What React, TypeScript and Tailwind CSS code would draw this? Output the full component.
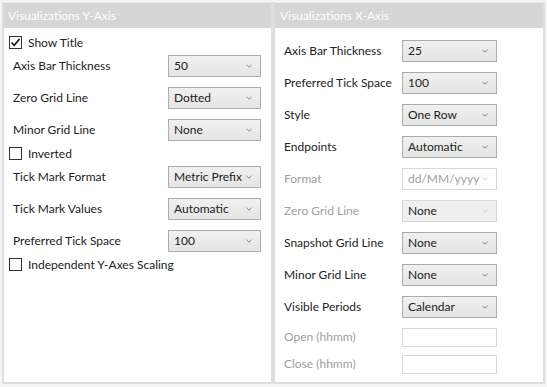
import React from "react";

const font = { fontFamily: '"Segoe UI", Lato, "Noto Sans", sans-serif' };

function Chevron({ disabled }: { disabled?: boolean }) {
  return (
    <svg width="6" height="4" viewBox="0 0 6 4" className="shrink-0">
      <path d="M0.5 0.8 L3 3.2 L5.5 0.8" fill="none" stroke={disabled ? "#c8c8c8" : "#808080"} strokeWidth="1" />
    </svg>
  );
}

function Select({ value, w, disabled, grayText }: { value: string; w: string; disabled?: boolean; grayText?: boolean }) {
  return (
    <div
      className={`${w} h-[22px] flex items-center justify-between pl-[5px] pr-[8px] border ${
        disabled ? "border-[#d9d9d9] bg-[#efefef]" : "border-[#acacac] bg-gradient-to-b from-[#f0f0f0] to-[#e5e5e5]"
      } ${grayText ? "bg-white text-[#a0a0a0]" : "text-[#222]"}`}
    >
      <span>{value}</span>
      <Chevron disabled={disabled} />
    </div>
  );
}

function Check({ checked, label }: { checked?: boolean; label: string }) {
  return (
    <div className="flex items-center h-[15px] pl-[5px] gap-[6px]">
      <div className="w-[13px] h-[13px] border border-[#333] bg-white flex items-center justify-center">
        {checked && (
          <svg width="11" height="11" viewBox="0 0 11 11">
            <path d="M1.5 5.5 L4.2 8.3 L9.5 2" fill="none" stroke="#111" strokeWidth="1.6" />
          </svg>
        )}
      </div>
      <span className="text-[#222]">{label}</span>
    </div>
  );
}

function LRow({ label, value }: { label: string; value: string }) {
  return (
    <div className="flex items-center h-[32px] pl-[9px]">
      <span className="w-[155px] text-[#222]">{label}</span>
      <Select value={value} w="w-[93px]" />
    </div>
  );
}

function RRow({ label, value, disabled, grayLabel, grayText }: { label: string; value: string; disabled?: boolean; grayLabel?: boolean; grayText?: boolean }) {
  return (
    <div className="flex items-center h-[32px] pl-[9px]">
      <span className={`w-[118px] ${grayLabel ? "text-[#a0a0a0]" : "text-[#222]"}`}>{label}</span>
      <Select value={value} w="w-[95px]" disabled={disabled} grayText={grayText} />
    </div>
  );
}

export default function App() {
  return (
    <div className="w-[547px] h-[387px] bg-[#f4f4f4] p-[2px] flex text-[12px]" style={font}>
      <div className="w-[271px] h-[382px] border-2 border-t-0 border-[#dedede] bg-white flex flex-col">
        <div className="h-[26px] shrink-0 bg-[#d6d6d6] text-white flex items-center pl-[4px] border-t border-[#ececec]">Visualizations Y-Axis</div>
        <div className="pt-[7px] flex flex-col">
          <Check checked label="Show Title" />
          <LRow label="Axis Bar Thickness" value="50" />
          <LRow label="Zero Grid Line" value="Dotted" />
          <LRow label="Minor Grid Line" value="None" />
          <Check label="Inverted" />
          <LRow label="Tick Mark Format" value="Metric Prefix" />
          <LRow label="Tick Mark Values" value="Automatic" />
          <LRow label="Preferred Tick Space" value="100" />
          <Check label="Independent Y-Axes Scaling" />
        </div>
      </div>
      <div className="w-[272px] h-[382px] border-2 border-t-0 border-[#dedede] bg-white flex flex-col">
        <div className="h-[26px] shrink-0 bg-[#d6d6d6] text-white flex items-center pl-[5px] border-t border-[#ececec]">Visualizations X-Axis</div>
        <div className="pt-[7px] flex flex-col">
          <RRow label="Axis Bar Thickness" value="25" />
          <RRow label="Preferred Tick Space" value="100" />
          <RRow label="Style" value="One Row" />
          <RRow label="Endpoints" value="Automatic" />
          <RRow label="Format" value="dd/MM/yyyy" disabled grayLabel grayText />
          <RRow label="Zero Grid Line" value="None" disabled grayLabel />
          <RRow label="Snapshot Grid Line" value="None" />
          <RRow label="Minor Grid Line" value="None" />
          <RRow label="Visible Periods" value="Calendar" />
          <div className="flex items-center h-[27px] pl-[9px] pt-[1px]">
            <span className="w-[118px] text-[#a0a0a0]">Open (hhmm)</span>
            <div className="w-[95px] h-[19px] border border-[#d9d9d9] bg-white" />
          </div>
          <div className="flex items-center h-[28px] pl-[9px]">
            <span className="w-[118px] text-[#a0a0a0]">Close (hhmm)</span>
            <div className="w-[95px] h-[19px] border border-[#d9d9d9] bg-white" />
          </div>
        </div>
      </div>
    </div>
  );
}
